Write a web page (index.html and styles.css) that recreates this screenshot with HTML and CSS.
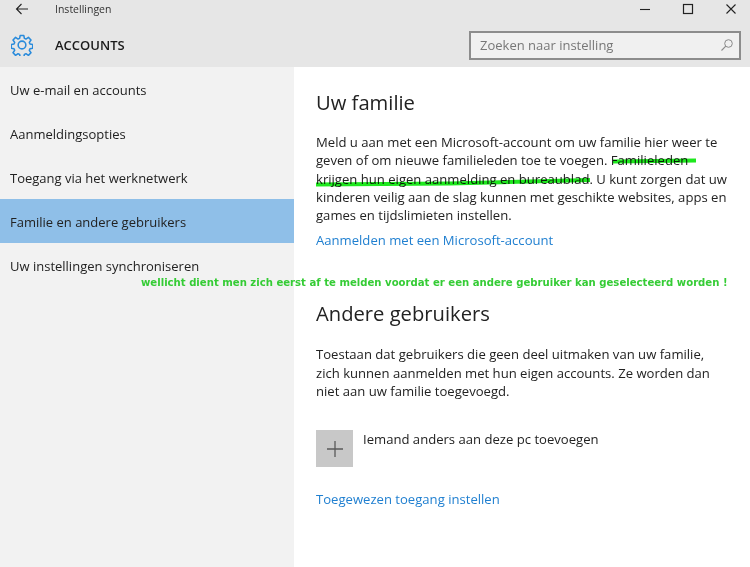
FILE: index.html
```html
<!DOCTYPE html>
<html lang="nl">
<head>
<meta charset="utf-8">
<title>Instellingen</title>
<link rel="stylesheet" href="styles.css">
</head>
<body>
<div class="window">
  <header class="header">
    <div class="titlebar">
      <svg class="back" width="14" height="12" viewBox="0 0 14 12"><path d="M13 6H1.500M6.500 1 1.500 6l5 5" fill="none" stroke="#222" stroke-width="1.100"/></svg>
      <span class="title">Instellingen</span>
      <div class="controls">
        <svg width="12" height="12" viewBox="0 0 12 12"><path d="M1 6.500h10" stroke="#222" stroke-width="1.100"/></svg>
        <svg width="12" height="12" viewBox="0 0 12 12"><rect x="1.500" y="1.500" width="9" height="9" fill="none" stroke="#222" stroke-width="1.200"/></svg>
        <svg width="12" height="12" viewBox="0 0 12 12"><path d="M1.500 1.500l9 9M10.500 1.500l-9 9" stroke="#222" stroke-width="1.100"/></svg>
      </div>
    </div>
    <div class="pagebar">
      <svg class="gear" width="22" height="22" viewBox="0 0 24 24"><path d="M10 1.700h4l.6 3.100 1.700.7 2.700-1.800 2.800 2.800-1.800 2.700.7 1.700 3 .6v4l-3 .6-.7 1.700 1.800 2.700-2.800 2.800-2.700-1.800-1.700.7-.6 3h-4l-.6-3-1.700-.7-2.700 1.800-2.800-2.800 1.800-2.700-.7-1.700-3-.6v-4l3-.6.7-1.700-1.800-2.700 2.800-2.800 2.700 1.800 1.700-.7z" fill="none" stroke="#2a8bdb" stroke-width="1.700" stroke-linejoin="round"/><circle cx="12" cy="12" r="4.200" fill="none" stroke="#2a8bdb" stroke-width="1.700"/></svg>
      <span class="section">ACCOUNTS</span>
      <div class="search">
        <span>Zoeken naar instelling</span>
        <svg width="14" height="14" viewBox="0 0 14 14"><circle cx="8.500" cy="5.500" r="3.800" fill="none" stroke="#8a8a8a" stroke-width="1"/><path d="M5.800 8.200 1.500 12.500" stroke="#8a8a8a" stroke-width="1.100"/></svg>
      </div>
    </div>
  </header>
  <div class="body">
    <nav class="nav">
      <div class="nav-item">Uw e-mail en accounts</div>
      <div class="nav-item">Aanmeldingsopties</div>
      <div class="nav-item">Toegang via het werknetwerk</div>
      <div class="nav-item active">Familie en andere gebruikers</div>
      <div class="nav-item">Uw instellingen synchroniseren</div>
    </nav>
    <main class="main">
      <h2 class="heading">Uw familie</h2>
      <p class="para">Meld u aan met een Microsoft-account om uw familie hier weer te<br>geven of om nieuwe familieleden toe te voegen. Familieleden<br>krijgen hun eigen aanmelding en bureaublad. U kunt zorgen dat uw<br>kinderen veilig aan de slag kunnen met geschikte websites, apps en<br>games en tijdslimieten instellen.</p>
      <a class="link first-link">Aanmelden met een Microsoft-account</a>
      <h2 class="heading second">Andere gebruikers</h2>
      <p class="para para-two">Toestaan dat gebruikers die geen deel uitmaken van uw familie,<br>zich kunnen aanmelden met hun eigen accounts. Ze worden dan<br>niet aan uw familie toegevoegd.</p>
      <div class="add">
        <div class="plus"><svg width="16" height="16" viewBox="0 0 16 16"><path d="M8 0v16M0 8h16" stroke="#5a5a5a" stroke-width="1.300"/></svg></div>
        <span>Iemand anders aan deze pc toevoegen</span>
      </div>
      <a class="link">Toegewezen toegang instellen</a>
    </main>
  </div>
  <svg class="marks" width="750" height="567" viewBox="0 0 750 567"><path d="M613 161.500 696 160.500M316 184.500 450 183.500 590 180" fill="none" stroke="#1ee81e" stroke-width="4"/></svg>
  <div class="note">wellicht dient men zich eerst af te melden voordat er een andere gebruiker kan geselecteerd worden !</div>
</div>
</body>
</html>
```
FILE: styles.css
```css
* { box-sizing: border-box; }
html, body { margin: 0; padding: 0; }
body { font-family: "Open Sans", "Noto Sans", sans-serif; color: #222; background: #fff; }
.window { position: relative; width: 750px; height: 567px; overflow: hidden; }
.header { height: 67px; background: #e6e6e6; }
.titlebar { display: flex; align-items: center; height: 17px; padding-left: 15px; }
.back { margin-right: 26px; }
.title { font-size: 10.500px; color: #333; }
.controls { margin-left: auto; display: flex; gap: 31px; padding-right: 13px; }
.pagebar { display: flex; align-items: center; height: 50px; padding: 6px 9px 0 11px; }
.gear { margin-right: 22px; }
.section { font-size: 13px; font-weight: 600; color: #1a1a1a; }
.search { margin-left: auto; width: 272px; height: 29px; border: 2px solid #8c8c8c; background: #f0f0f0; display: flex; align-items: center; justify-content: space-between; padding: 0 5px 0 9px; font-size: 13px; color: #777; }
.body { display: flex; height: 500px; }
.nav { width: 294px; background: #f2f2f2; }
.nav-item { height: 44px; display: flex; align-items: center; padding: 1px 0 0 10px; font-size: 13px; color: #222; }
.active { background: #8fbfe8; }
.main { flex: 1; padding: 21px 0 0 22px; }
.heading { margin: 0; font-size: 20.200px; font-weight: 400; line-height: 28px; color: #222; }
.second { margin-top: 50px; }
.para { margin: 17px 0 0; font-size: 13.100px; line-height: 18.300px; color: #222; white-space: nowrap; }
.para-two { margin-top: 18px; }
.link { display: block; font-size: 13.100px; line-height: 18px; color: #1f7fd0; }
.first-link { margin-top: 7px; }
.add { display: flex; align-items: flex-start; gap: 10px; margin-top: 30px; margin-bottom: 23px; font-size: 13.100px; line-height: 18px; }
.plus { width: 37px; height: 37px; background: #c8c8c8; display: flex; align-items: center; justify-content: center; }
.marks { position: absolute; left: 0; top: 0; pointer-events: none; mix-blend-mode: multiply; }
.note { position: absolute; left: 141px; top: 276px; font-family: "DejaVu Sans", sans-serif; font-size: 10.120px; font-weight: 700; line-height: 14px; color: #35cc35; white-space: nowrap; }
```
